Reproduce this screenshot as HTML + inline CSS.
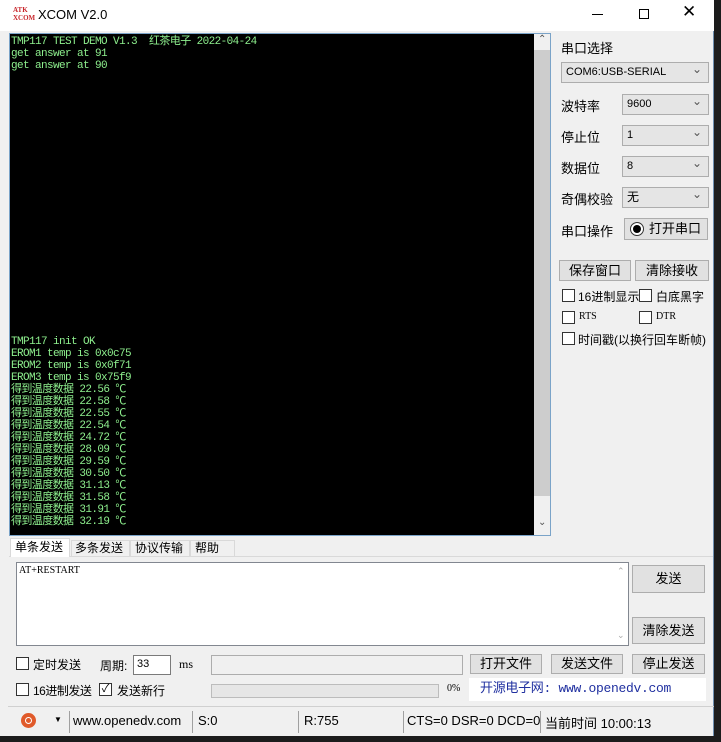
<!DOCTYPE html>
<html><head><meta charset="utf-8"><style>
*{margin:0;padding:0;box-sizing:border-box}
body{width:721px;height:742px;background:#1c1c1c;position:relative;overflow:hidden;font-family:"Liberation Sans","Noto Sans CJK SC",sans-serif;font-size:12px;color:#000}
.a{position:absolute}
#win{left:0;top:0;width:714px;height:736px;background:#f0f0f0;border-right:1px solid #6f8fb0}
#title{left:0;top:0;width:714px;height:31px;background:#fff}
#term{left:9px;top:33px;width:542px;height:503px;background:#000;border:1px solid #7aa3c8}
.tx{font-family:"Liberation Mono","Noto Sans CJK SC",monospace;font-size:11px;color:#8ef08e;line-height:12px;white-space:pre;letter-spacing:-0.6px}
.sb{left:524px;top:0;width:16px;height:501px;background:#f0f0f0}
.lbl{font-size:13px}
.combo{background:#e5e5e5;border:1px solid #adadad;font-size:11px;padding-left:4px;line-height:19px}
.combo:after{content:"⌄";position:absolute;right:6px;top:-3px;font-size:12px;color:#555}
.btn{background:#e1e1e1;border:1px solid #adadad;text-align:center;font-size:13px}
.cb{width:13px;height:13px;border:1px solid #333;background:#fff}
.sep{width:1px;height:22px;background:#a0a0a0;top:711px}
</style></head><body>
<div id="win" class="a">
<div id="title" class="a">
 <div class="a" style="left:13px;top:6px;width:20px;height:18px;color:#c8282d;font-size:7px;font-weight:bold;line-height:8px;font-family:'Liberation Serif',serif">ATK<br>XCOM</div>
 <div class="a" style="left:38px;top:7px;font-size:13px">XCOM V2.0</div>
 <div class="a" style="left:592px;top:14px;width:11px;height:1px;background:#000"></div>
 <div class="a" style="left:639px;top:9px;width:10px;height:10px;border:1px solid #000"></div>
 <div class="a" style="left:682px;top:2px;font-size:17px;font-weight:300">✕</div>
</div>
<div id="term" class="a">
 <div class="a tx" style="left:1px;top:2px">TMP117 TEST DEMO V1.3  红茶电子 2022-04-24
get answer at 91
get answer at 90</div>
 <div class="a tx" style="left:1px;top:302px">TMP117 init OK
EROM1 temp is 0x0c75
EROM2 temp is 0x0f71
EROM3 temp is 0x75f9
得到温度数据 22.56 ℃
得到温度数据 22.58 ℃
得到温度数据 22.55 ℃
得到温度数据 22.54 ℃
得到温度数据 24.72 ℃
得到温度数据 28.09 ℃
得到温度数据 29.59 ℃
得到温度数据 30.50 ℃
得到温度数据 31.13 ℃
得到温度数据 31.58 ℃
得到温度数据 31.91 ℃
得到温度数据 32.19 ℃</div>
 <div class="a sb"><div class="a" style="left:0;top:16px;width:16px;height:446px;background:#cdcdcd"></div>
 <div class="a" style="left:4px;top:0;font-size:10px;color:#555">⌃</div>
 <div class="a" style="left:4px;top:483px;font-size:10px;color:#555">⌄</div></div>
</div>
<div class="a lbl" style="left:561px;top:38px">串口选择</div>
<div class="a combo" style="left:561px;top:62px;width:148px;height:21px">COM6:USB-SERIAL</div>
<div class="a lbl" style="left:561px;top:96px">波特率</div>
<div class="a combo" style="left:622px;top:94px;width:87px;height:21px">9600</div>
<div class="a lbl" style="left:561px;top:127px">停止位</div>
<div class="a combo" style="left:622px;top:125px;width:87px;height:21px">1</div>
<div class="a lbl" style="left:561px;top:158px">数据位</div>
<div class="a combo" style="left:622px;top:156px;width:87px;height:21px">8</div>
<div class="a lbl" style="left:561px;top:189px">奇偶校验</div>
<div class="a combo" style="left:622px;top:187px;width:87px;height:21px;font-size:12px">无</div>
<div class="a lbl" style="left:561px;top:221px">串口操作</div>
<div class="a btn" style="left:624px;top:218px;width:84px;height:22px;line-height:20px;padding-left:18px">打开串口</div>
<div class="a" style="left:630px;top:222px;width:14px;height:14px;border-radius:50%;border:1px solid #333;background:#fff"></div>
<div class="a" style="left:633px;top:225px;width:8px;height:8px;border-radius:50%;background:#000"></div>
<div class="a btn" style="left:559px;top:260px;width:72px;height:21px;line-height:19px">保存窗口</div>
<div class="a btn" style="left:635px;top:260px;width:74px;height:21px;line-height:19px">清除接收</div>
<div class="a cb" style="left:562px;top:289px"></div><div class="a" style="left:578px;top:288px;font-size:12px">16进制显示</div>
<div class="a cb" style="left:639px;top:289px"></div><div class="a" style="left:656px;top:288px;font-size:12px">白底黑字</div>
<div class="a cb" style="left:562px;top:311px"></div><div class="a" style="left:579px;top:311px;font-size:10px;font-family:'Liberation Serif',serif">RTS</div>
<div class="a cb" style="left:639px;top:311px"></div><div class="a" style="left:656px;top:311px;font-size:10px;font-family:'Liberation Serif',serif">DTR</div>
<div class="a cb" style="left:562px;top:332px"></div><div class="a" style="left:578px;top:331px;font-size:12px">时间戳(以换行回车断帧)</div>
<!-- tabs -->
<div class="a" style="left:9px;top:556px;width:704px;height:1px;background:#d9d9d9"></div>
<div class="a" style="left:10px;top:538px;width:60px;height:19px;background:#fff;border:1px solid #d9d9d9;border-bottom:none;padding-left:4px;line-height:17px">单条发送</div>
<div class="a" style="left:71px;top:540px;width:59px;height:17px;border:1px solid #d9d9d9;padding-left:3px;line-height:15px;background:#f0f0f0">多条发送</div>
<div class="a" style="left:130px;top:540px;width:60px;height:17px;border:1px solid #d9d9d9;padding-left:4px;line-height:15px">协议传输</div>
<div class="a" style="left:190px;top:540px;width:45px;height:17px;border:1px solid #d9d9d9;padding-left:4px;line-height:15px">帮助</div>
<div class="a" style="left:16px;top:562px;width:613px;height:84px;background:#fff;border:1px solid #828790"></div>
<div class="a" style="left:19px;top:565px;font-size:10px;font-family:'Liberation Serif',serif">AT+RESTART</div>
<div class="a" style="left:617px;top:566px;font-size:9px;color:#aaa">⌃</div>
<div class="a" style="left:617px;top:630px;font-size:9px;color:#aaa">⌄</div>
<div class="a btn" style="left:632px;top:565px;width:73px;height:28px;line-height:26px">发送</div>
<div class="a btn" style="left:632px;top:617px;width:73px;height:27px;line-height:25px">清除发送</div>
<div class="a cb" style="left:16px;top:657px"></div><div class="a" style="left:33px;top:656px;font-size:12px">定时发送</div>
<div class="a" style="left:100px;top:657px;font-size:12px">周期:</div>
<div class="a" style="left:133px;top:655px;width:38px;height:20px;background:#fff;border:1px solid #7a7a7a;font-size:11px;padding:2px 3px">33</div>
<div class="a" style="left:179px;top:657px;font-size:12px;font-family:'Liberation Serif',serif">ms</div>
<div class="a" style="left:211px;top:655px;width:252px;height:20px;background:#f0f0f0;border:1px solid #adadad"></div>
<div class="a btn" style="left:470px;top:654px;width:72px;height:20px;line-height:18px">打开文件</div>
<div class="a btn" style="left:551px;top:654px;width:72px;height:20px;line-height:18px">发送文件</div>
<div class="a btn" style="left:632px;top:654px;width:73px;height:20px;line-height:18px">停止发送</div>
<div class="a cb" style="left:16px;top:683px"></div><div class="a" style="left:33px;top:682px;font-size:12px;letter-spacing:-0.5px">16进制发送</div>
<div class="a cb" style="left:99px;top:683px;font-size:11px;line-height:10px;text-align:center">✓</div><div class="a" style="left:117px;top:682px;font-size:12px">发送新行</div>
<div class="a" style="left:211px;top:684px;width:228px;height:14px;background:#e6e6e6;border:1px solid #bcbcbc"></div>
<div class="a" style="left:447px;top:683px;font-size:10px;font-family:'Liberation Serif',serif">0%</div>
<div class="a" style="left:469px;top:678px;width:237px;height:23px;background:#fff;color:#2030a0;font-family:'Liberation Mono','Noto Sans CJK SC',monospace;font-size:13px;line-height:22px;padding-left:11px;letter-spacing:-0.3px">开源电子网: www.openedv.com</div>
<!-- status -->
<div class="a" style="left:8px;top:706px;width:706px;height:1px;background:#d0d0d0"></div>
<div class="a" style="left:21px;top:713px;width:15px;height:15px;border-radius:50%;background:#e05a2a"></div>
<div class="a" style="left:25px;top:717px;width:7px;height:7px;border-radius:50%;border:1.5px solid #fff"></div>
<div class="a" style="left:54px;top:715px;font-size:8px">▼</div>
<div class="a sep" style="left:69px"></div>
<div class="a lbl" style="left:73px;top:713px">www.openedv.com</div>
<div class="a sep" style="left:192px"></div>
<div class="a lbl" style="left:198px;top:713px">S:0</div>
<div class="a sep" style="left:298px"></div>
<div class="a lbl" style="left:304px;top:713px">R:755</div>
<div class="a sep" style="left:403px"></div>
<div class="a lbl" style="left:407px;top:713px">CTS=0 DSR=0 DCD=0</div>
<div class="a sep" style="left:540px"></div>
<div class="a lbl" style="left:545px;top:713px">当前时间 10:00:13</div>
</div>
</body></html>
